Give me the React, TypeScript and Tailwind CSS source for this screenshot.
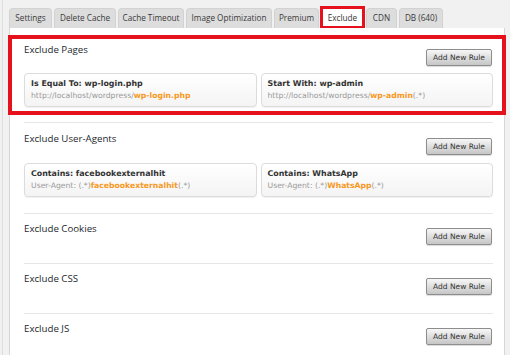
import React from "react";

const tabs = [
  { label: "Settings", w: 43 },
  { label: "Delete Cache", w: 62 },
  { label: "Cache Timeout", w: 66 },
  { label: "Image Optimization", w: 86 },
  { label: "Premium", w: 45 },
  { label: "Exclude", w: 43, active: true },
  { label: "CDN", w: 31 },
  { label: "DB (640)", w: 44 },
];

type Rule = { title: string; pre: string; hi: string; post: string };

function AddButton() {
  return (
    <button
      className="block h-[17px] w-[66px] rounded-[2px] border border-[#8d8d8d] bg-gradient-to-b from-[#f7f7f7] to-[#c6c6c6] text-[#333] text-[7.5px] leading-none shadow-[0_1px_1px_rgba(0,0,0,0.15)]"
      style={{ fontFamily: '"DejaVu Sans", "Liberation Sans", sans-serif' }}
    >
      Add New Rule
    </button>
  );
}

function Card({ r }: { r: Rule }) {
  return (
    <div
      className="h-[34px] rounded-[4px] border border-[#dcdcdc] bg-gradient-to-b from-white to-[#f4f4f4] px-[6px] pt-[4px] shadow-[0_1px_1px_rgba(0,0,0,0.06)]"
      style={{ fontFamily: '"DejaVu Sans", Verdana, sans-serif' }}
    >
      <div className="text-[7.9px] font-bold leading-[12px] text-[#333]">{r.title}</div>
      <div className="text-[7.7px] leading-[11px] text-[#9a9a9a]">
        {r.pre}
        <span className="font-bold text-[#f7981d]">{r.hi}</span>
        {r.post}
      </div>
    </div>
  );
}

function Section({
  title,
  rules,
  first,
}: {
  title: string;
  rules?: Rule[];
  first?: boolean;
}) {
  let cls = "";
  let gridCls = "mt-[7px]";
  if (first) {
    cls = "pt-[9px] pb-[15px]";
  } else if (rules) {
    cls = "border-t border-[#e6e6e6] pt-[9px] pb-[16px]";
    gridCls = "mt-[8px]";
  } else {
    cls = "border-t border-[#e6e6e6] pt-[8px] pb-[18px]";
  }
  return (
    <div className={cls}>
      <div className="flex items-start justify-between">
        <h3
          className="text-[9.7px] leading-[14px] text-[#23282d] font-normal"
          style={{ fontFamily: '"Open Sans", sans-serif' }}
        >
          {title}
        </h3>
        <div className="mt-[6px] mr-[1px] flex">
          <AddButton />
        </div>
      </div>
      {rules && (
        <div className={gridCls + " grid grid-cols-2 gap-[4px]"}>
          {rules.map((r) => (
            <Card key={r.title} r={r} />
          ))}
        </div>
      )}
    </div>
  );
}

export default function App() {
  return (
    <div className="relative h-[355px] w-[510px] overflow-hidden bg-[#f1f1f1]">
      <div className="absolute left-[2px] top-0 h-full w-px bg-[#dedede]" />
      <div className="pl-[9px] pt-[8px] pr-[5px]">
        {/* tabs */}
        <div className="flex gap-[2px]" style={{ fontFamily: '"Open Sans", sans-serif' }}>
          {tabs.map((t) => (
            <div
              key={t.label}
              className={
                "relative flex h-[20px] items-center justify-center rounded-t-[4px] text-[8.2px] " +
                (t.active
                  ? "bg-white text-[#333]"
                  : "bg-[#dddddd] text-[#3a3a3a] border border-b-0 border-[#d2d2d2]")
              }
              style={{ width: t.w }}
            >
              {t.label}
              {t.active && (
                <div className="pointer-events-none absolute -left-[1px] -right-[1px] -top-[2px] -bottom-[1px] border-[3px] border-[#e5111d]" />
              )}
            </div>
          ))}
        </div>
        {/* panel */}
        <div className="relative h-[400px] border-x border-[#d6d6d6] bg-white pl-[14px] pr-[11px] pt-[6px]">
          <div className="pointer-events-none absolute -left-[2px] top-[7px] h-[80px] w-[498px] border-[4px] border-[#e5111d]" />
          <Section
            first
            title="Exclude Pages"
            rules={[
              { title: "Is Equal To: wp-login.php", pre: "http://localhost/wordpress/", hi: "wp-login.php", post: "" },
              { title: "Start With: wp-admin", pre: "http://localhost/wordpress/", hi: "wp-admin", post: "(.*)" },
            ]}
          />
          <Section
            title="Exclude User-Agents"
            rules={[
              { title: "Contains: facebookexternalhit", pre: "User-Agent: (.*)", hi: "facebookexternalhit", post: "(.*)" },
              { title: "Contains: WhatsApp", pre: "User-Agent: (.*)", hi: "WhatsApp", post: "(.*)" },
            ]}
          />
          <Section title="Exclude Cookies" />
          <Section title="Exclude CSS" />
          <Section title="Exclude JS" />
        </div>
      </div>
    </div>
  );
}
